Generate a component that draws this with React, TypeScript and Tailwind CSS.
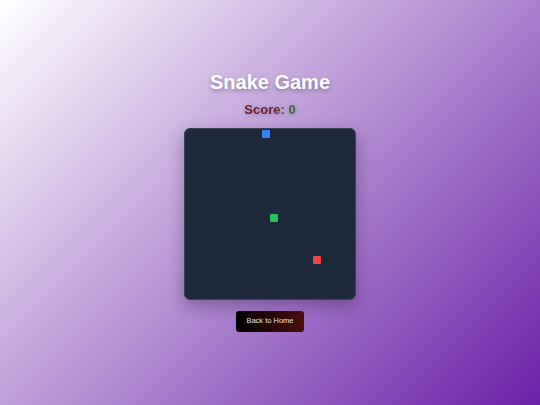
const CELL = 8.5;

const cells = [
  { col: 9, row: 0, cls: "bg-[#3b82f6]" },
  { col: 10, row: 10, cls: "bg-[#22c55e]" },
  { col: 15, row: 15, cls: "bg-[#ef4444]" },
];

export default function App() {
  return (
    <div className="flex min-h-screen flex-col items-center justify-center bg-[linear-gradient(135deg,#ffffff_0%,#6b21a8_100%)] font-['Liberation_Sans',Arial,sans-serif]">
      <h1 className="mb-2 text-[20px] font-bold leading-6 text-white [text-shadow:0_2px_4px_rgba(0,0,0,0.3)]">
        Snake Game
      </h1>
      <p className="mb-[10px] bg-[linear-gradient(90deg,#6e1a22_0%,#6e2030_60%,#356b35_85%)] bg-clip-text text-[13px] font-bold leading-4 text-transparent [filter:drop-shadow(0_1px_2px_rgba(0,0,0,0.25))]">
        Score: 0
      </p>
      <div className="relative mb-[11px] h-[172px] w-[172px] rounded-md border border-[#3a4456] bg-[#1e293b] shadow-[0_6px_16px_rgba(40,20,60,0.35)]">
        {cells.map((c) => (
          <div
            key={`${c.col}-${c.row}`}
            className={`absolute h-2 w-2 rounded-[1px] ${c.cls}`}
            style={{ left: c.col * CELL, top: c.row * CELL + (c.row === 0 ? 1 : 0) }}
          />
        ))}
      </div>
      <button className="mb-1 h-[21px] rounded-[3px] bg-[linear-gradient(90deg,#000000_0%,#4a0e0e_100%)] px-[10px] text-[7.5px] text-[#e5e5e5]">
        Back to Home
      </button>
    </div>
  );
}
